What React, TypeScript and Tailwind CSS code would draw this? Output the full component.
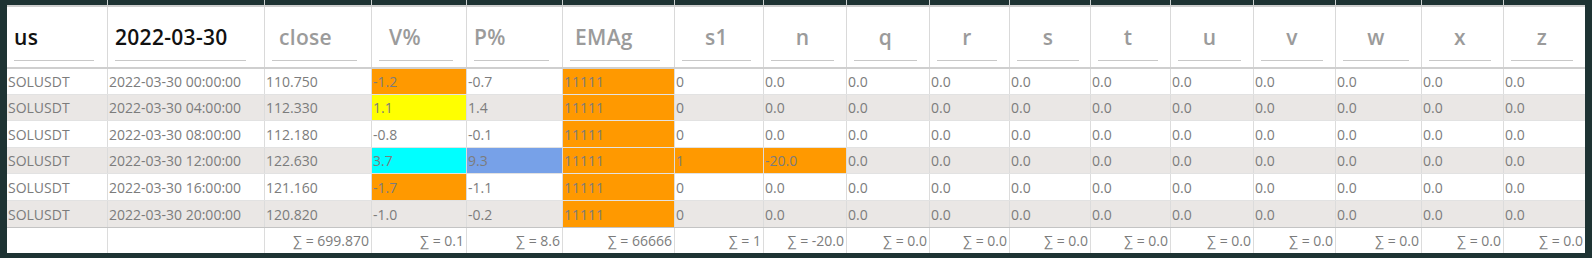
type Col = { key: string; label: string; w: string; head: string; pad: string };

const cols: Col[] = [
  { key: "sym", label: "us", w: "w-[100px]", head: "text-[#111] text-left", pad: "mr-[13px]" },
  { key: "time", label: "2022-03-30", w: "w-[157px]", head: "text-[#111] text-left", pad: "mr-[18px]" },
  { key: "close", label: "close", w: "w-[107px]", head: "text-[#9b9b9b] text-left pl-[7px]", pad: "mr-[14px]" },
  { key: "v", label: "V%", w: "w-[95px]", head: "text-[#9b9b9b] text-left pl-[10px]", pad: "mr-[13px]" },
  { key: "p", label: "P%", w: "w-[96px]", head: "text-[#9b9b9b] text-left", pad: "mr-[13px]" },
  { key: "ema", label: "EMAg", w: "w-[112px]", head: "text-[#9b9b9b] text-left pl-[5px]", pad: "mr-[14px]" },
  { key: "s1", label: "s1", w: "w-[89px]", head: "text-[#9b9b9b] text-center", pad: "mr-[12px]" },
  { key: "n", label: "n", w: "w-[83px]", head: "text-[#9b9b9b] text-center", pad: "mr-[12px]" },
  { key: "q", label: "q", w: "w-[83px]", head: "text-[#9b9b9b] text-center", pad: "mr-[12px]" },
  { key: "r", label: "r", w: "w-[80px]", head: "text-[#9b9b9b] text-center", pad: "mr-[12px]" },
  { key: "s", label: "s", w: "w-[81px]", head: "text-[#9b9b9b] text-center", pad: "mr-[11px]" },
  { key: "t", label: "t", w: "w-[80px]", head: "text-[#9b9b9b] text-center", pad: "mr-[12px]" },
  { key: "u", label: "u", w: "w-[83px]", head: "text-[#9b9b9b] text-center", pad: "mr-[12px]" },
  { key: "vv", label: "v", w: "w-[82px]", head: "text-[#9b9b9b] text-center", pad: "mr-[12px]" },
  { key: "w", label: "w", w: "w-[86px]", head: "text-[#9b9b9b] text-center", pad: "mr-[12px]" },
  { key: "x", label: "x", w: "w-[82px]", head: "text-[#9b9b9b] text-center", pad: "mr-[12px]" },
  { key: "z", label: "z", w: "w-[82px]", head: "text-[#9b9b9b] text-center", pad: "mr-[12px]" },
];

const ORANGE = "bg-[#ff9900]";

type Cell = { v: string; bg?: string };

const zeros = (n: number): Cell[] => Array.from({ length: n }, () => ({ v: "0.0" }));

const rows: { h: string; alt: boolean; last?: boolean; cells: Cell[] }[] = [
  {
    h: "h-[26px]",
    alt: false,
    cells: [
      { v: "SOLUSDT" }, { v: "2022-03-30 00:00:00" }, { v: "110.750" },
      { v: "-1.2", bg: ORANGE }, { v: "-0.7" }, { v: "11111", bg: ORANGE }, { v: "0" }, ...zeros(10),
    ],
  },
  {
    h: "h-[26px]",
    alt: true,
    cells: [
      { v: "SOLUSDT" }, { v: "2022-03-30 04:00:00" }, { v: "112.330" },
      { v: "1.1", bg: "bg-[#ffff00]" }, { v: "1.4" }, { v: "11111", bg: ORANGE }, { v: "0" }, ...zeros(10),
    ],
  },
  {
    h: "h-[27px]",
    alt: false,
    cells: [
      { v: "SOLUSDT" }, { v: "2022-03-30 08:00:00" }, { v: "112.180" },
      { v: "-0.8" }, { v: "-0.1" }, { v: "11111", bg: ORANGE }, { v: "0" }, ...zeros(10),
    ],
  },
  {
    h: "h-[26px]",
    alt: true,
    cells: [
      { v: "SOLUSDT" }, { v: "2022-03-30 12:00:00" }, { v: "122.630" },
      { v: "3.7", bg: "bg-[#00ffff]" }, { v: "9.3", bg: "bg-[#77a1e8]" }, { v: "11111", bg: ORANGE },
      { v: "1", bg: ORANGE }, { v: "-20.0", bg: ORANGE }, ...zeros(9),
    ],
  },
  {
    h: "h-[27px]",
    alt: false,
    cells: [
      { v: "SOLUSDT" }, { v: "2022-03-30 16:00:00" }, { v: "121.160" },
      { v: "-1.7", bg: ORANGE }, { v: "-1.1" }, { v: "11111", bg: ORANGE }, { v: "0" }, ...zeros(10),
    ],
  },
  {
    h: "h-[26px]",
    alt: true,
    last: true,
    cells: [
      { v: "SOLUSDT" }, { v: "2022-03-30 20:00:00" }, { v: "120.820" },
      { v: "-1.0" }, { v: "-0.2" }, { v: "11111", bg: ORANGE }, { v: "0" }, ...zeros(10),
    ],
  },
];

const sums = ["", "", "699.870", "0.1", "8.6", "66666", "1", "-20.0", "0.0", "0.0", "0.0", "0.0", "0.0", "0.0", "0.0", "0.0", "0.0"];

export default function App() {
  return (
    <div className="w-[1592px] h-[258px] bg-[#1e3333] flex flex-col font-['Open_Sans',sans-serif] overflow-hidden">
      <div className="flex h-[5px] pl-[7px]">
        {cols.map((c, i) => (
          <div key={c.key} className={`${c.w} h-full ${i > 0 ? "border-l border-[#c9cfcf]" : ""}`} />
        ))}
      </div>

      <div className="ml-[7px] w-[1578px] bg-white border-t-2 border-[#cfcfcf]">
        {/* header */}
        <div className="flex h-[62px] border-b-2 border-[#cfcfcf]">
          {cols.map((c, i) => (
            <div key={c.key} className={`${c.w} h-full flex flex-col pt-[16px] ${i > 0 ? "border-l border-[#d9d9d9]" : ""}`}>
              <div className={`ml-[7px] ${c.pad} flex flex-col`}>
                <div className={`text-[21px] leading-[28px] font-semibold tracking-[0.3px] whitespace-nowrap ${c.head}`}>{c.label}</div>
                <div className="mt-[9px] h-px bg-[#c8c8c8]" />
              </div>
            </div>
          ))}
        </div>

        {/* body */}
        {rows.map((r, ri) => (
          <div
            key={ri}
            className={`flex ${r.h} ${r.alt ? "bg-[#eae7e5]" : "bg-white"} ${r.last ? "" : "border-b border-[#e2e2e2]"}`}
          >
            {r.cells.map((cell, ci) => (
              <div
                key={ci}
                className={`${cols[ci].w} h-full flex items-center pl-px text-[14px] text-[#7c7c7c] whitespace-nowrap ${cell.bg ?? ""} ${ci > 0 ? "border-l border-[#dcdcdc]" : ""}`}
              >
                {cell.v}
              </div>
            ))}
          </div>
        ))}

        {/* totals */}
        <div className="flex h-[26px] border-t border-[#c4c4c4]">
          {sums.map((s, i) => (
            <div
              key={i}
              className={`${cols[i].w} h-full flex items-center justify-end pr-[2px] text-[14px] text-[#7c7c7c] whitespace-nowrap ${i > 0 ? "border-l border-[#dcdcdc]" : ""}`}
            >
              {s ? `∑ = ${s}` : ""}
            </div>
          ))}
        </div>
      </div>
    </div>
  );
}
